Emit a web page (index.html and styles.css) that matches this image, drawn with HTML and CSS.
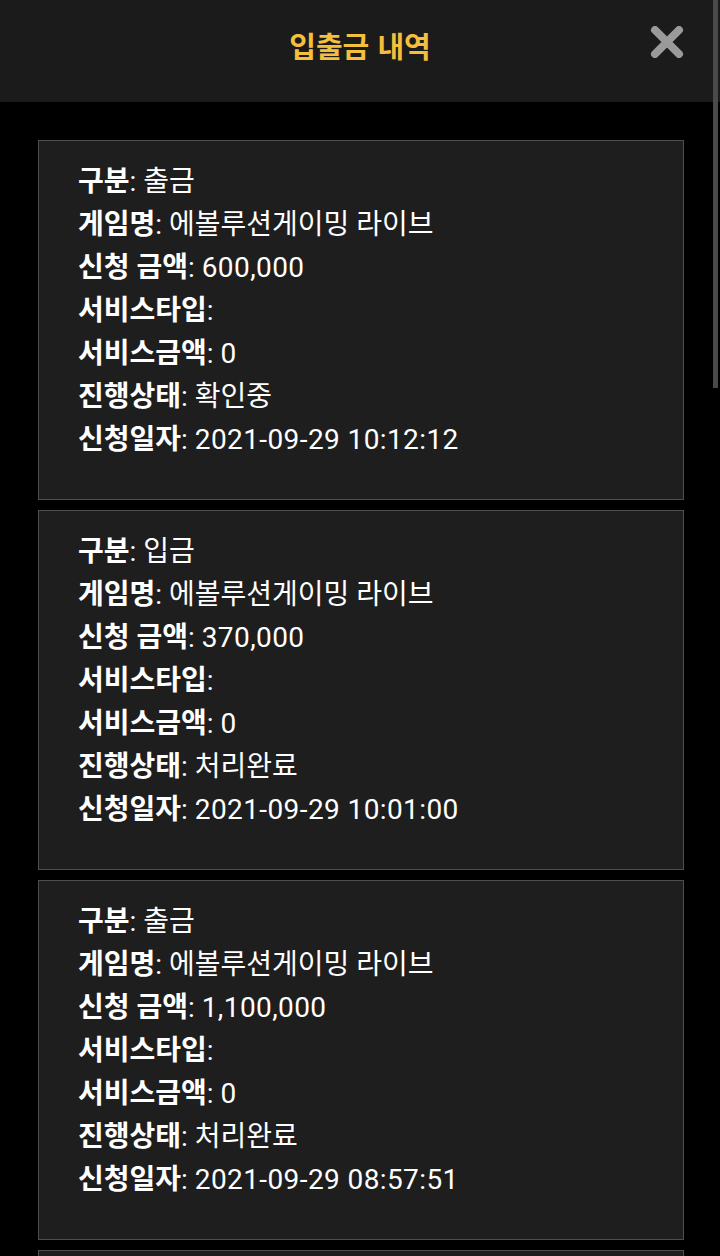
FILE: index.html
```html
<!DOCTYPE html>
<html lang="ko">
<head>
<meta charset="utf-8">
<title>입출금 내역</title>
<link rel="stylesheet" href="styles.css">
</head>
<body>
<header class="topbar">
  <h1 class="title">입출금 내역</h1>
  <button class="close" aria-label="닫기">
    <svg width="34" height="32" viewBox="0 0 34 32"><path d="M5 4 L29 28 M29 4 L5 28" stroke="#9a9a9a" stroke-width="8" stroke-linecap="round"/></svg>
  </button>
</header>
<div class="scrollbar"></div>
<main class="list">
  <section class="card">
    <p><b>구분</b>: 출금</p>
    <p><b>게임명</b>: 에볼루션게이밍 라이브</p>
    <p><b>신청 금액</b>: <span class="num">600,000</span></p>
    <p><b>서비스타입</b>:</p>
    <p><b>서비스금액</b>: <span class="num">0</span></p>
    <p><b>진행상태</b>: 확인중</p>
    <p><b>신청일자</b>: <span class="num">2021-09-29 10:12:12</span></p>
  </section>
  <section class="card">
    <p><b>구분</b>: 입금</p>
    <p><b>게임명</b>: 에볼루션게이밍 라이브</p>
    <p><b>신청 금액</b>: <span class="num">370,000</span></p>
    <p><b>서비스타입</b>:</p>
    <p><b>서비스금액</b>: <span class="num">0</span></p>
    <p><b>진행상태</b>: 처리완료</p>
    <p><b>신청일자</b>: <span class="num">2021-09-29 10:01:00</span></p>
  </section>
  <section class="card">
    <p><b>구분</b>: 출금</p>
    <p><b>게임명</b>: 에볼루션게이밍 라이브</p>
    <p><b>신청 금액</b>: <span class="num">1,100,000</span></p>
    <p><b>서비스타입</b>:</p>
    <p><b>서비스금액</b>: <span class="num">0</span></p>
    <p><b>진행상태</b>: 처리완료</p>
    <p><b>신청일자</b>: <span class="num">2021-09-29 08:57:51</span></p>
  </section>
  <section class="card card-stub"></section>
</main>
</body>
</html>
```
FILE: styles.css
```css
html, body {
  margin: 0;
  padding: 0;
  background: #000;
  height: 100%;
  overflow: hidden;
}
body {
  font-family: Roboto, "Noto Sans CJK KR", sans-serif;
  color: #fff;
  position: relative;
}
.topbar {
  height: 102px;
  background: #1b1b1b;
  display: flex;
  align-items: center;
  justify-content: center;
  position: relative;
}
.title {
  margin: 0;
  font-size: 29px;
  font-weight: 700;
  color: #f5bf3c;
  font-family: "Noto Sans CJK KR", sans-serif;
  transform: translateY(-6px);
}
.close {
  position: absolute;
  right: 36px;
  top: 26px;
  background: none;
  border: 0;
  padding: 0;
  width: 34px;
  height: 32px;
  display: block;
}
.close svg { display: block; }
.scrollbar {
  position: absolute;
  right: 2px;
  top: 0;
  width: 5px;
  height: 388px;
  background: #4a4a4a;
  z-index: 5;
}
.list {
  padding: 38px 36px 0 38px;
  display: flex;
  flex-direction: column;
  gap: 10px;
}
.card {
  background: #1e1e1e;
  border: 1px solid #4e4e4e;
  padding: 19px 20px 38px 39px;
  flex-shrink: 0;
}
.card-stub {
  height: 300px;
  padding: 0;
}
.card p {
  margin: 0;
  font-size: 28px;
  line-height: 43px;
  height: 43px;
  white-space: nowrap;
}
.card b {
  font-weight: 700;
}
.num {
  letter-spacing: 0.4px;
}
```
